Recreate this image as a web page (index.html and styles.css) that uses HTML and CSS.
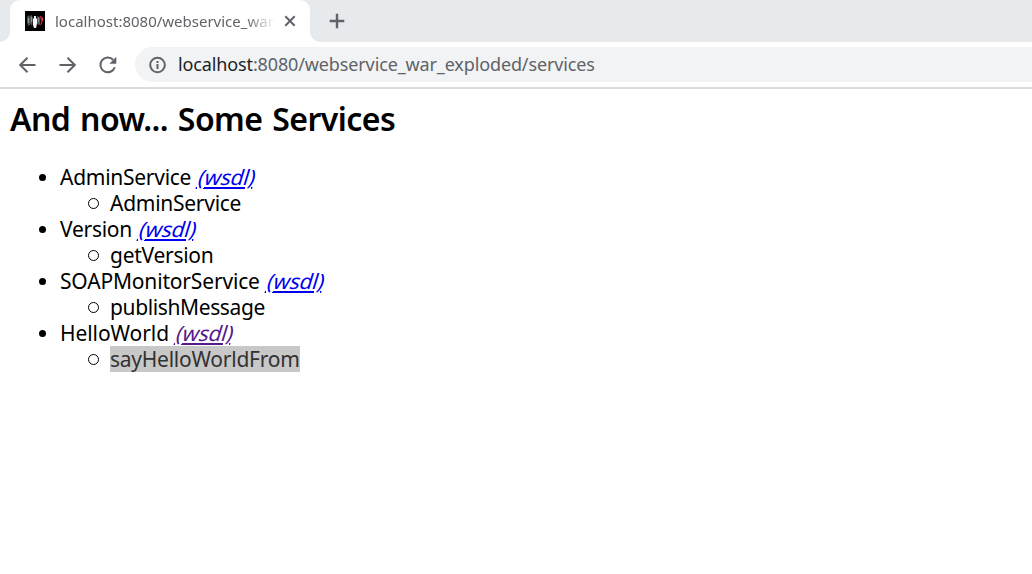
FILE: index.html
```html
<!DOCTYPE html>
<html lang="en">
<head>
<meta charset="utf-8">
<title>localhost:8080/webservice_war_exploded/services</title>
<link rel="stylesheet" href="styles.css">
</head>
<body>
<header class="browser">
  <div class="tab-strip">
    <div class="tab">
      <svg class="favicon" viewBox="0 0 20 20"><path fill="#000" d="M0 0h20v20H0z"/><path fill="#4d5557" d="M2 6l2-2 1 3v7l-2 1-1-4zM5 5l2-1 1 4-1 7-2-3zM12 5l3 1v8l-3-1z"/><path fill="#899194" d="M3 7h1v5H3zM6 6h1v5H6zM13 7h1v4h-1z"/><path fill="#f3f5f5" d="M9 5h2v2l1 1v5l-1 4H9l-1-3V8l1-1z"/><path fill="#b51f2b" d="M15 5h1l2 4-1 4-2 2 1-4z"/><path fill="#e04450" d="M16 5l2 2v3l-1-2z"/></svg>
      <span class="tab-title">localhost:8080/webservice_war</span>
      <svg class="close" viewBox="0 0 12 12"><path d="M1.3 1.3l9.4 9.4M10.7 1.3l-9.4 9.4"/></svg>
    </div>
    <svg class="new-tab" viewBox="0 0 16 16"><path d="M8 .7v14.6M.7 8h14.6"/></svg>
  </div>
  <nav class="toolbar">
    <svg class="nav-icon" viewBox="0 0 20 20"><path d="M18.5 10H3.5M10.5 2.7L3.2 10l7.3 7.3"/></svg>
    <svg class="nav-icon" viewBox="0 0 20 20"><path d="M2.5 10h15M10.5 2.7l7.3 7.3-7.3 7.3"/></svg>
    <svg class="nav-icon" viewBox="0 0 20 20"><path d="M17.8 12.2A7.4 7.4 0 1 1 16.2 4.8"/><path class="solid" d="M19.3 1.8v7h-7z"/></svg>
    <div class="address">
      <svg class="info" viewBox="0 0 18 18"><circle cx="8.5" cy="9" r="7.3"/><path d="M8.5 8v5M8.5 5v2"/></svg>
      <span class="url"><b class="host">localhost</b>:8080/webservice_war_exploded/services</span>
    </div>
  </nav>
</header>
<main class="page">
  <h2 class="heading">And now... Some Services</h2>
  <ul class="services">
    <li><span class="name admin">AdminService</span><a class="wsdl" href="#admin">(wsdl)</a>
      <ul class="methods"><li><span class="admin">AdminService</span></li></ul></li>
    <li><span class="name version">Version</span><a class="wsdl" href="#version">(wsdl)</a>
      <ul class="methods"><li><span class="version">getVersion</span></li></ul></li>
    <li><span class="name soap">SOAPMonitorService</span><a class="wsdl" href="#soap">(wsdl)</a>
      <ul class="methods"><li><span class="publish">publishMessage</span></li></ul></li>
    <li><span class="name hello">HelloWorld</span><a class="wsdl visited" href="#hello">(wsdl)</a>
      <ul class="methods"><li><span class="selected">sayHelloWorldFrom</span></li></ul></li>
  </ul>
</main>
</body>
</html>
```
FILE: styles.css
```css
* { box-sizing: border-box; }
body { margin: 0; background: #fff; color: #000; font-family: "Noto Sans", "Open Sans", sans-serif; overflow: hidden; }
svg { display: block; flex: none; fill: none; stroke: #5f6368; stroke-width: 2; }
.browser { height: 89px; border-bottom: 2px solid #dadce0; }
.tab-strip { height: 42px; background: #e6eaed; display: flex; align-items: center; padding-left: 10px; }
.tab { position: relative; width: 300px; height: 42px; background: #fff; border-radius: 10px 10px 0 0; display: flex; align-items: center; padding: 0 14px 0 15px; }
.tab::before, .tab::after { content: ""; position: absolute; bottom: 0; width: 10px; height: 10px; }
.tab::before { left: -10px; background: radial-gradient(circle at 0 0, #e6eaed 9.5px, #fff 10px); }
.tab::after { right: -10px; background: radial-gradient(circle at 100% 0, #e6eaed 9.5px, #fff 10px); }
.favicon { width: 20px; height: 20px; stroke: none; }
.tab-title { width: 219px; margin-left: 10px; white-space: nowrap; font-size: 15px; line-height: 24px; color: #606367; -webkit-mask-image: linear-gradient(90deg, #000 190px, transparent 220px); mask-image: linear-gradient(90deg, #000 190px, transparent 220px); }
.close { width: 12px; height: 12px; margin-left: 10px; }
.new-tab { width: 16px; height: 16px; margin-left: 19px; stroke-width: 2.4; }
.toolbar { height: 45px; display: flex; align-items: center; padding-left: 17px; gap: 20px; }
.nav-icon { width: 20px; height: 20px; }
.nav-icon .solid { fill: #5f6368; stroke: none; }
.address { flex: 1; height: 35px; margin-left: -2px; background: #f1f3f4; border-radius: 18px 0 0 18px; display: flex; align-items: center; padding-left: 14px; }
.info { width: 18px; height: 18px; }
.url { margin: -2px 0 0 11px; white-space: nowrap; font-size: 18px; line-height: 28px; letter-spacing: -.13px; color: #5f6368; }
.host { font-weight: 400; color: #202124; }
.page { padding: 10px 10px; font-size: 21px; line-height: 26px; }
.heading { margin: 0 0 25px; font-size: 32px; line-height: 40px; font-weight: 600; letter-spacing: -.55px; word-spacing: 2px; white-space: nowrap; }
.services, .methods { margin: 0; padding: 0; list-style: none; }
.services { padding-left: 50px; }
.methods { padding-left: 50px; }
.services li { position: relative; white-space: nowrap; }
.services li::before { content: ""; position: absolute; left: -21px; top: 10px; width: 7px; height: 7px; border-radius: 50%; background: #000; }
.methods li::before { left: -22px; top: 8px; background: none; border: 1px solid #000; width: 9px; height: 9px; }
.name { margin-right: 6px; }
.admin { letter-spacing: -.27px; }
.version { letter-spacing: -.27px; }
.soap { letter-spacing: -.17px; }
.publish { letter-spacing: -.38px; }
.hello { letter-spacing: -.08px; }
.wsdl { display: inline-block; height: 26px; transform: skewX(-17deg); transform-origin: 0 20px; letter-spacing: -.17px; color: #00e; text-decoration: underline; text-decoration-thickness: 2px; text-underline-offset: 2px; }
.visited { color: #551a8b; }
.selected { display: inline-block; height: 26px; background: #c8c8c8; color: #323232; letter-spacing: -.25px; }
```
